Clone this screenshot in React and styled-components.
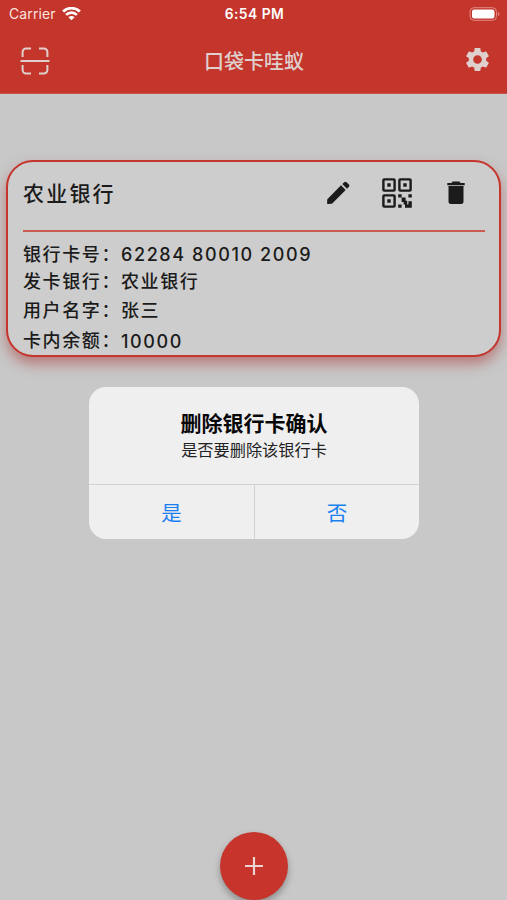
import React from "react";
import styled, { createGlobalStyle } from "styled-components";
import { MdSettings } from "react-icons/md";

const GlobalStyle = createGlobalStyle`
  * {
    box-sizing: border-box;
  }
  body {
    margin: 0;
    background-color: #c8c8c8;
    font-family: Inter, "Noto Sans CJK SC", sans-serif;
  }
`;

const Screen = styled.div`
  position: relative;
  height: 900px;
  overflow: hidden;
  display: flex;
  flex-direction: column;
  background-color: #c8c8c8;
`;

const Header = styled.header`
  height: 94px;
  background-color: #c4352c;
  border-bottom: 1px solid #c6554e;
`;

const StatusBar = styled.div`
  height: 27px;
  padding: 0 7px 0 9px;
  display: grid;
  grid-template-columns: 1fr auto 1fr;
  align-items: center;
  color: #fff;
  font-size: 14px;
`;

const Carrier = styled.div`
  display: flex;
  align-items: center;
  gap: 6px;
  color: #fbe3df;
  letter-spacing: 0.1px;
`;

const Time = styled.div`
  font-size: 13.8px;
  font-weight: 600;
  letter-spacing: 0.5px;
`;

const Battery = styled.svg`
  justify-self: end;
`;

const NavBar = styled.div`
  height: 67px;
  padding: 1px 15px 0 20px;
  display: grid;
  grid-template-columns: 30px 1fr 30px;
  align-items: center;
  color: #dfcfcd;
`;

const Title = styled.h1`
  margin: 1px 4px 0 0;
  text-align: center;
  font-size: 20px;
  font-weight: 500;
  line-height: 28px;
`;

const IconButton = styled.button`
  padding: 0;
  border: 0;
  background: none;
  color: inherit;
  display: grid;
  place-items: center;
`;

const SettingsButton = styled(IconButton)`
  margin-bottom: 3px;
`;

const Card = styled.section`
  height: 197px;
  margin: 66px 6px 0;
  padding: 0 14px 0 15px;
  border: 2.5px solid #c4352c;
  border-radius: 27px;
  background-color: #cdcdcd;
  box-shadow: 0 7px 13px rgba(170, 50, 50, 0.5);
  color: #1b1b1b;
`;

const CardHeader = styled.div`
  height: 68px;
  padding-right: 14px;
  display: flex;
  align-items: center;
  justify-content: space-between;
`;

const Divider = styled.div`
  height: 2px;
  background-color: #ca5c54;
`;

const BankName = styled.h2`
  margin: 0;
  padding-bottom: 9px;
  font-size: 21px;
  font-weight: 500;
  letter-spacing: 2.2px;
`;

const Actions = styled.div`
  display: grid;
  grid-template-columns: 30px 32px 30px;
  column-gap: 28px;
  align-items: center;
  padding-bottom: 7px;
`;

const Details = styled.div`
  padding-top: 8px;
`;

const Row = styled.div`
  height: ${(props) => props.$height}px;
  display: flex;
  align-items: center;
  white-space: nowrap;
  font-size: 18px;
  font-weight: 500;
  letter-spacing: 1.6px;
`;

const Label = styled.span`
  width: 98px;
  padding-bottom: 3px;
`;

const Value = styled.span`
  padding-${(props) => (props.$numeric ? "top" : "bottom")}: ${(props) => (props.$numeric ? 1 : 3)}px;
`;

const Dialog = styled.div`
  position: absolute;
  top: 387px;
  left: 89px;
  width: 330px;
  height: 152px;
  border-radius: 17px;
  background-color: #efefef;
  text-align: center;
  overflow: hidden;
`;

const DialogBody = styled.div`
  height: 97px;
  padding-top: 23px;
`;

const DialogTitle = styled.h3`
  margin: 0;
  font-size: 21px;
  font-weight: 700;
  line-height: 28px;
  color: #080808;
`;

const DialogText = styled.p`
  margin: 0;
  font-size: 16.2px;
  line-height: 25px;
  color: #222;
`;

const DialogActions = styled.div`
  height: 55px;
  display: grid;
  grid-template-columns: 1fr 1fr;
  border-top: 1px solid #d2d2d2;
`;

const DialogButton = styled.button`
  padding: 0;
  border: 0;
  background: none;
  font-family: inherit;
  font-size: 20.5px;
  color: #1a7ff0;
  & + & {
    border-left: 1px solid #d2d2d2;
  }
`;

const AddButton = styled.button`
  position: absolute;
  top: 832px;
  left: 220px;
  width: 68px;
  height: 68px;
  padding: 0;
  border: 0;
  border-radius: 50%;
  display: grid;
  place-items: center;
  background-color: #c6342b;
  box-shadow: 0 4px 7px rgba(0, 0, 0, 0.3);
`;

const WifiIcon = () => (
  <svg width="19" height="14" viewBox="0 0 19 14" fill="none" stroke="#fff">
    <path d="M1.1 4.6a12 12 0 0 1 16.8 0" strokeWidth="2.8" />
    <path d="M4.1 7.9a7.6 7.6 0 0 1 10.8 0" strokeWidth="2.6" />
    <path d="M9.5 13.3 6.4 10.2a4.4 4.4 0 0 1 6.2 0z" fill="#fff" stroke="none" />
  </svg>
);

const ScanIcon = () => (
  <svg width="30" height="28" viewBox="0 0 30 28" fill="none" stroke="currentColor" strokeWidth="2">
    <path d="M2.6 10V5a3.5 3.5 0 0 1 3.5-3.5H11M19 1.5h4.9A3.5 3.5 0 0 1 27.4 5v5M2.6 18v5a3.5 3.5 0 0 0 3.5 3.5H11M19 26.5h4.9a3.5 3.5 0 0 0 3.5-3.5v-5M.5 14h29" />
  </svg>
);

const PencilIcon = () => (
  <svg width="24" height="24" viewBox="0 0 24 24" fill="currentColor">
    <path d="M15 4.3 19.7 9 6.5 22.2a2 2 0 0 1-1.3.6l-3.1.3a.9.9 0 0 1-1-1l.1-3.1a2 2 0 0 1 .6-1.3z" />
    <path d="m16.3 3 1.7-1.6a2 2 0 0 1 2.8 0L22.7 3.200a2 2 0 0 1 0 2.800l-1.700 1.700z" />
  </svg>
);

const QrIcon = () => (
  <svg width="32" height="32" viewBox="0 0 32 32" fill="currentColor">
    <g fill="none" stroke="currentColor" strokeWidth="2.4">
      <rect x="2.4" y="2.4" width="11.2" height="11.2" rx="0.8" />
      <rect x="18.4" y="2.4" width="11.2" height="11.2" rx="0.8" />
      <rect x="2.4" y="18.4" width="11.2" height="11.2" rx="0.8" />
    </g>
    <path d="M6.3 6.3h3.4v3.4H6.3zM22.3 6.3h3.4v3.4h-3.4zM6.3 22.3h3.4v3.4H6.3z" />
    <path d="M17.2 17.2h3.4v3.4h-3.4zM27.4 17.2h3.4v3.4h-3.4zM20.6 20.6h4v3.2h1.6v3.6h-3.6v-2.4h-2zM17.2 27.4h3.4v3.4h-3.4zM27.4 24.2h3.4v6.6H24v-3.4h3.4z" />
  </svg>
);

const TrashIcon = () => (
  <svg width="20" height="24" viewBox="0 0 20 24" fill="currentColor">
    <path d="M6.5.6h7l1 1.4h4.2v2.2H1.3V2h4.2zM2.5 5h15v15.6a2.5 2.5 0 0 1-2.5 2.5H5a2.5 2.5 0 0 1-2.5-2.5z" />
  </svg>
);

const details = [
  { label: "银行卡号：", value: "62284 80010 2009", numeric: true, height: 28 },
  { label: "发卡银行：", value: "农业银行", height: 27 },
  { label: "用户名字：", value: "张三", height: 31 },
  { label: "卡内余额：", value: "10000", numeric: true, height: 29 },
];

const App = () => {
  return (
    <>
      <GlobalStyle />
      <Screen>
        <Header>
          <StatusBar>
            <Carrier>
              Carrier
              <WifiIcon />
            </Carrier>
            <Time>6:54 PM</Time>
            <Battery width="31" height="14" viewBox="0 0 31 14">
              <rect x="1" y=".7" width="26.5" height="12.6" rx="4" fill="none" stroke="#e08b85" />
              <rect x="3" y="2.5" width="22.5" height="9" rx="2.2" fill="#fff" />
              <path d="M29 5v4q1.5-.6 1.5-2T29 5z" fill="#e08b85" />
            </Battery>
          </StatusBar>
          <NavBar>
            <IconButton>
              <ScanIcon />
            </IconButton>
            <Title>口袋卡哇蚁</Title>
            <SettingsButton>
              <MdSettings size={29} />
            </SettingsButton>
          </NavBar>
        </Header>

        <Card>
          <CardHeader>
            <BankName>农业银行</BankName>
            <Actions>
              <IconButton>
                <PencilIcon />
              </IconButton>
              <IconButton>
                <QrIcon />
              </IconButton>
              <IconButton>
                <TrashIcon />
              </IconButton>
            </Actions>
          </CardHeader>
          <Divider />
          <Details>
            {details.map((item) => (
              <Row key={item.label} $height={item.height}>
                <Label>{item.label}</Label>
                <Value $numeric={item.numeric}>{item.value}</Value>
              </Row>
            ))}
          </Details>
        </Card>

        <Dialog>
          <DialogBody>
            <DialogTitle>删除银行卡确认</DialogTitle>
            <DialogText>是否要删除该银行卡</DialogText>
          </DialogBody>
          <DialogActions>
            <DialogButton>是</DialogButton>
            <DialogButton>否</DialogButton>
          </DialogActions>
        </Dialog>

        <AddButton>
          <svg width="18" height="18" viewBox="0 0 18 18" stroke="#ead3d1" strokeWidth="2.2">
            <path d="M9 0v18M0 9h18" />
          </svg>
        </AddButton>
      </Screen>
    </>
  );
};

export default App;
